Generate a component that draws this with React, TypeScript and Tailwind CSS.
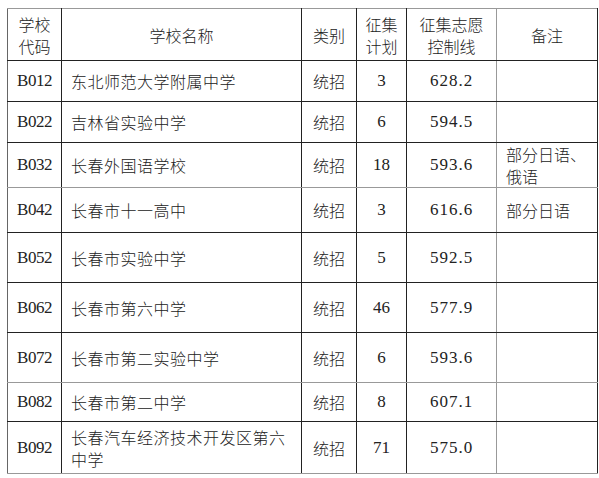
import React from 'react'

type Row = { code: string; name: string[]; kind: string; plan: string; line: string; note: string[]; h: string; bottom: string }

const ROWS: Row[] = [
  { code: 'B012', name: ['东北师范大学附属中学'], kind: '统招', plan: '3', line: '628.2', note: [], h: 'h-[41px]', bottom: 'border-b-[#222]' },
  { code: 'B022', name: ['吉林省实验中学'], kind: '统招', plan: '6', line: '594.5', note: [], h: 'h-[41px]', bottom: 'border-b-[#222]' },
  { code: 'B032', name: ['长春外国语学校'], kind: '统招', plan: '18', line: '593.6', note: ['部分日语、', '俄语'], h: 'h-[45px]', bottom: 'border-b-[#999]' },
  { code: 'B042', name: ['长春市十一高中'], kind: '统招', plan: '3', line: '616.6', note: ['部分日语'], h: 'h-[45px]', bottom: 'border-b-[#222]' },
  { code: 'B052', name: ['长春市实验中学'], kind: '统招', plan: '5', line: '592.5', note: [], h: 'h-[50px]', bottom: 'border-b-[#222]' },
  { code: 'B062', name: ['长春市第六中学'], kind: '统招', plan: '46', line: '577.9', note: [], h: 'h-[50px]', bottom: 'border-b-[#222]' },
  { code: 'B072', name: ['长春市第二实验中学'], kind: '统招', plan: '6', line: '593.6', note: [], h: 'h-[50px]', bottom: 'border-b-[#999]' },
  { code: 'B082', name: ['长春市第二中学'], kind: '统招', plan: '8', line: '607.1', note: [], h: 'h-[39px]', bottom: 'border-b-[#222]' },
  { code: 'B092', name: ['长春汽车经济技术开发区第六', '中学'], kind: '统招', plan: '71', line: '575.0', note: [], h: 'h-[52px]', bottom: 'border-b-[#999]' },
]

const cjk = "font-['Noto_Sans_CJK_SC',sans-serif]"
const num = "font-['Liberation_Serif','Noto_Sans_CJK_SC',serif] text-[17px]"

function Lines({ items }: { items: string[] }) {
  return (
    <>
      {items.map((t, i) => (
        <div key={i}>{t}</div>
      ))}
    </>
  )
}

export default function App() {
  return (
    <div className="w-[599px] h-[478px] bg-white pt-[8px] pl-[7px] text-[#222] text-[16px] leading-[22px] font-light">
      <table className="border-collapse table-fixed w-[590px]">
        <colgroup>
          <col className="w-[54px]" />
          <col className="w-[240px]" />
          <col className="w-[55px]" />
          <col className="w-[50px]" />
          <col className="w-[90px]" />
          <col className="w-[101px]" />
        </colgroup>
        <thead>
          <tr className={`h-[52px] ${cjk}`}>
            <th className="font-light border border-[#222] border-t-[#999] border-l-[#666] text-center align-middle p-0">
              <Lines items={['学校', '代码']} />
            </th>
            <th className="font-light border border-[#222] border-t-[#999] text-center align-middle p-0">学校名称</th>
            <th className="font-light border border-[#222] border-t-[#999] text-center align-middle p-0">类别</th>
            <th className="font-light border border-[#222] border-t-[#999] text-center align-middle p-0">
              <Lines items={['征集', '计划']} />
            </th>
            <th className="font-light border border-[#222] border-t-[#999] border-r-[#999] text-center align-middle p-0">
              <Lines items={['征集志愿', '控制线']} />
            </th>
            <th className="font-light border border-[#222] border-t-[#999] text-center align-middle p-0">备注</th>
          </tr>
        </thead>
        <tbody>
          {ROWS.map((r) => (
            <tr key={r.code} className={r.h}>
              <td className={`border border-[#222] border-l-[#666] ${r.bottom} text-center align-middle p-0 ${num} tracking-[-0.5px]`}>{r.code}</td>
              <td className={`border border-[#222] ${r.bottom} text-left align-middle py-0 pl-[9px] pr-0 ${cjk} tracking-[0.5px]`}>
                <Lines items={r.name} />
              </td>
              <td className={`border border-[#222] ${r.bottom} text-center align-middle p-0 ${cjk}`}>{r.kind}</td>
              <td className={`border border-[#222] ${r.bottom} text-center align-middle p-0 ${num}`}>{r.plan}</td>
              <td className={`border border-[#222] border-r-[#999] ${r.bottom} text-center align-middle p-0 ${num} tracking-[1px]`}>{r.line}</td>
              <td className={`border border-[#222] ${r.bottom} text-left align-middle py-0 pl-[9px] pr-0 ${cjk}`}>
                <Lines items={r.note} />
              </td>
            </tr>
          ))}
        </tbody>
      </table>
    </div>
  )
}
